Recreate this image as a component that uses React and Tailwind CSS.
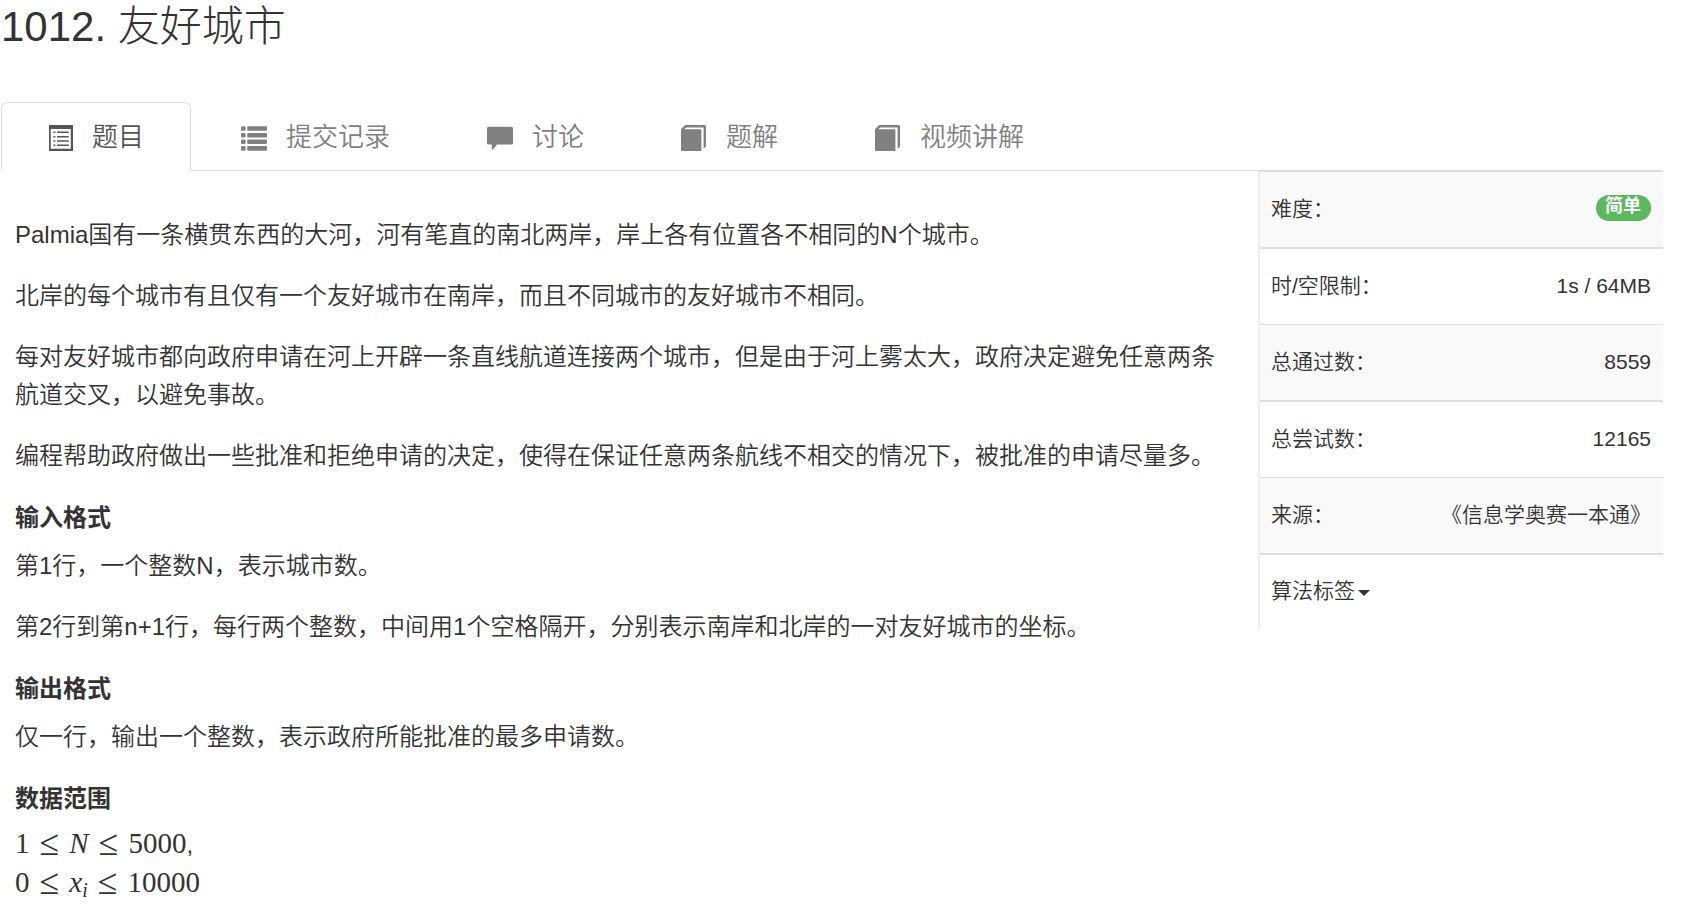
/*
 * problem page - statement on the left, limits and stats on the right
 */
import { useState } from 'react';

function ListAltIcon() {
  return (
    <svg viewBox="0 0 26 26" className="size-[26px]" fill="currentColor" aria-hidden="true">
      <path fillRule="evenodd" d="M2 0h24v26H2zM3.7 4v19.8h20.1V4z" />
      <path d="M6.4 6.6h2v1.5h-2zM6.4 11h2v1.5h-2zM6.4 15.3h2v1.5h-2zM6.4 19.5h2V21h-2zM10 6.6h11.8v1.5H10zM10 11h11.8v1.5H10zM10 15.3h11.8v1.5H10zM10 19.5h11.8V21H10z" />
    </svg>
  );
}

function ListIcon() {
  const rows = [1.2, 7.9, 14.4, 21.1];
  return (
    <svg viewBox="0 0 26 26" className="size-[26px]" fill="currentColor" aria-hidden="true">
      {rows.map(y => (
        <g key={y}>
          <rect x="0" y={y} width="4.6" height="4.6" rx="1.2" />
          <rect x="6.2" y={y} width="19.8" height="4.6" rx="1" />
        </g>
      ))}
    </svg>
  );
}

function CommentIcon() {
  return (
    <svg viewBox="0 0 26 26" className="size-[26px]" fill="currentColor" aria-hidden="true">
      <path d="M1.6 1.7h22.8A1.6 1.6 0 0 1 26 3.300v14.600a1.600 1.600 0 0 1-1.600 1.600H10.200L4.800 25.600V19.500H1.600A1.600 1.600 0 0 1 0 17.900V3.300A1.600 1.600 0 0 1 1.600 1.700z" />
    </svg>
  );
}

function BookIcon() {
  return (
    <svg viewBox="0 0 26 26" className="size-[26px]" fill="currentColor" aria-hidden="true">
      <path d="M0 4.200L3.600 .4Q4 0 4.600 0H23.600Q25 0 25 1.400V21.600L22.600 23.800V2.400H5.200L3.400 4.200H19.200Q20.400 4.200 20.400 5.400V26H1.200Q0 26 0 24.800z" />
    </svg>
  );
}

const tabs = [
  { id: 'problem', label: '题目', icon: ListAltIcon },
  { id: 'records', label: '提交记录', icon: ListIcon },
  { id: 'discuss', label: '讨论', icon: CommentIcon },
  { id: 'solution', label: '题解', icon: BookIcon },
  { id: 'video', label: '视频讲解', icon: BookIcon },
];

const stats = [
  { label: '时/空限制：', value: '1s / 64MB' },
  { label: '总通过数：', value: '8559' },
  { label: '总尝试数：', value: '12165' },
  { label: '来源：', value: '《信息学奥赛一本通》' },
];

function Heading({ children }) {
  return <h2 className="mb-[10px] pt-px font-bold">{children}</h2>;
}

function Leq() {
  return <span className="mx-[10px] align-[-2px] text-[36px] leading-none">≤</span>;
}

export default function App() {
  const [active, setActive] = useState('problem');

  return (
    <div className="pl-px pr-[18px] font-['Liberation_Sans','Noto_Sans_CJK_SC',sans-serif] text-[#333]">
      <h1 className="pt-1 text-[42px] leading-[46px] font-light">1012. 友好城市</h1>

      <nav className="mt-[52px] flex border-b border-[#ddd]">
        {tabs.map(tab => (
          <a
            key={tab.id}
            href={`#${tab.id}`}
            onClick={() => setActive(tab.id)}
            className={`-mb-px mr-1 flex h-[69px] items-center gap-[19px] rounded-t-md border pt-0.5 pr-[46px] pl-[45px] text-[26px] font-[350] ${
              active === tab.id
                ? 'border-[#ddd] border-b-white bg-white text-[#555]'
                : 'border-transparent text-[#808080]'
            }`}
          >
            <tab.icon />
            {tab.label}
          </a>
        ))}
      </nav>

      <div className="flex items-start">
        {/* statement */}
        <main className="flex-1 pl-[14px] pr-6 pt-[45px] text-[24px] leading-[38px] font-[350]">
          <div className="flex flex-col gap-[23px]">
            <p>Palmia国有一条横贯东西的大河，河有笔直的南北两岸，岸上各有位置各不相同的N个城市。</p>
            <p>北岸的每个城市有且仅有一个友好城市在南岸，而且不同城市的友好城市不相同。</p>
            <p>每对友好城市都向政府申请在河上开辟一条直线航道连接两个城市，但是由于河上雾太大，政府决定避免任意两条航道交叉，以避免事故。</p>
            <p>编程帮助政府做出一些批准和拒绝申请的决定，使得在保证任意两条航线不相交的情况下，被批准的申请尽量多。</p>
            <section>
              <Heading>输入格式</Heading>
              <p>第1行，一个整数N，表示城市数。</p>
              <p className="mt-[23px]">第2行到第n+1行，每行两个整数，中间用1个空格隔开，分别表示南岸和北岸的一对友好城市的坐标。</p>
            </section>
            <section>
              <Heading>输出格式</Heading>
              <p>仅一行，输出一个整数，表示政府所能批准的最多申请数。</p>
            </section>
            <section>
              <Heading>数据范围</Heading>
              <div className="-mt-1 font-['Liberation_Serif',serif] text-[29px] leading-[39px]">
                <p>
                  1<Leq /><i>N</i><Leq />5000
                  <span className="font-['Liberation_Sans',sans-serif] text-[24px] leading-none">,</span>
                </p>
                <p>
                  0<Leq /><i>x</i><sub className="text-[20px] leading-none"><i>i</i></sub><Leq />10000
                </p>
              </div>
            </section>
          </div>
        </main>

        {/* limits and stats */}
        <aside className="w-[405px] shrink-0 border-l-2 border-[#eee]">
          <table className="w-full border-separate border-spacing-0 text-[21px] font-[350]">
            <tbody>
              <tr className="bg-[#f9f9f9]">
                <td className="h-[76px] border-t border-[#ddd] pb-0.5 pl-[11px]">难度：</td>
                <td className="border-t border-[#ddd] pr-3 pb-1.5 text-right">
                  <span className="inline-block rounded-full bg-[#5cb85c] pr-[10px] pb-1 pl-[9px] align-middle text-[18px] leading-[22px] font-bold text-white">
                    简单
                  </span>
                </td>
              </tr>
              {stats.map((row, i) => (
                <tr key={row.label} className={i % 2 ? 'bg-[#f9f9f9]' : ''}>
                  <td className={`border-[#ddd] pb-0.5 pl-[11px] ${i % 2 ? 'h-[76px] border-t' : 'h-[77px] border-t-2'}`}>
                    {row.label}
                  </td>
                  <td className={`border-[#ddd] pr-3 pb-0.5 text-right ${i % 2 ? 'border-t' : 'border-t-2'}`}>
                    {row.value}
                  </td>
                </tr>
              ))}
              <tr>
                <td colSpan={2} className="h-[77px] border-t-2 border-[#ddd] pb-1 pl-[11px]">
                  <button type="button" className="flex cursor-pointer items-center gap-[3px]">
                    算法标签
                    <svg viewBox="0 0 12 6" className="mt-1 h-[6px] w-3" fill="currentColor" aria-hidden="true">
                      <path d="M0 0h12L6 6z" />
                    </svg>
                  </button>
                </td>
              </tr>
            </tbody>
          </table>
        </aside>
      </div>
    </div>
  );
}
